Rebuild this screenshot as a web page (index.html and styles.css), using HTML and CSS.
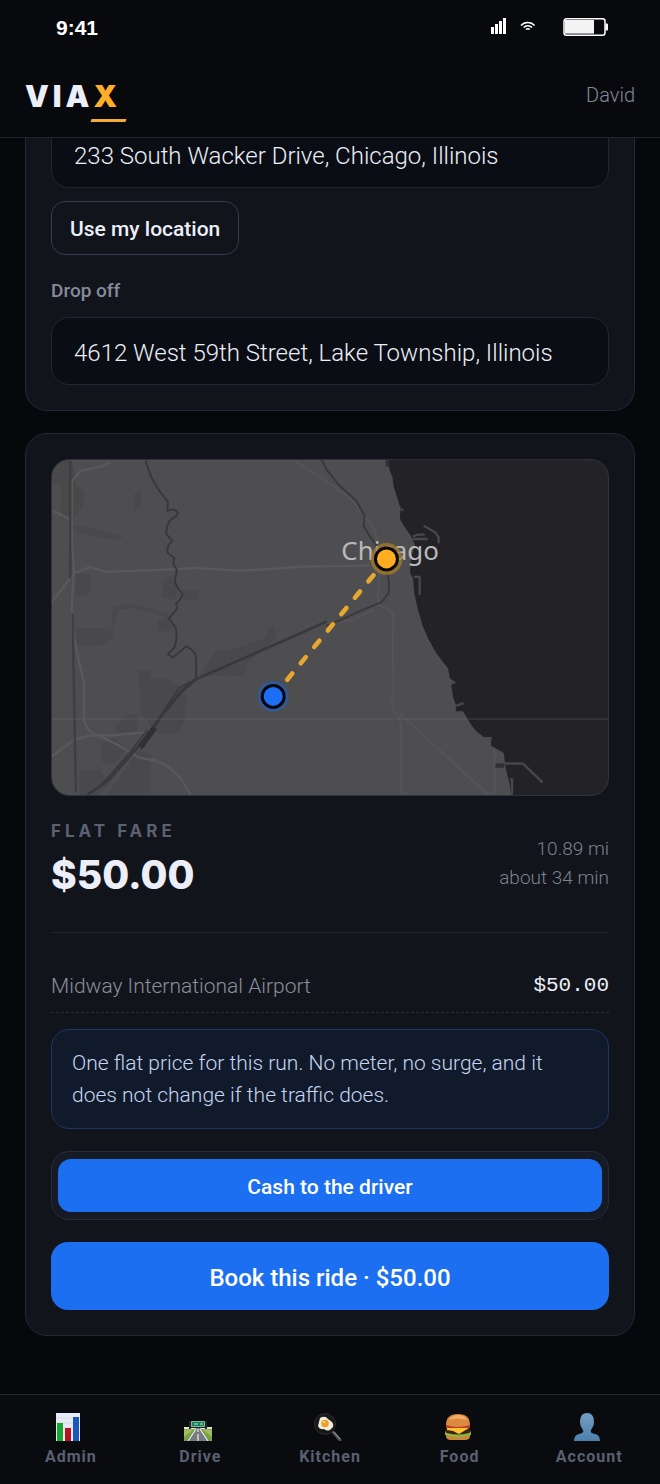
FILE: index.html
```html
<!DOCTYPE html>
<html lang="en">
<head>
<meta charset="utf-8">
<meta name="viewport" content="width=device-width, initial-scale=1">
<title>VIAX</title>
<link rel="stylesheet" href="styles.css">
</head>
<body>
<div class="app">
  <div class="status">
    <span class="clock">9:41</span>
    <div class="indicators">
      <svg class="signal" width="16" height="18" viewBox="0 0 16 18" aria-hidden="true"><path fill="#fff" d="M0 9h3v7H0zM4 6h3v10H4zM8 3h3v13H8zM12 0h3v16h-3z"/></svg>
      <svg class="wifi" width="16" height="18" viewBox="0 0 16 18" aria-hidden="true"><g fill="none" stroke="#fff" stroke-width="1.6"><path d="M1 7.500C4.500 3.400 11 3.400 14.600 7.500M3.700 9.600c2-2.500 6.300-2.500 8.300 0"/><path d="M6 11.500c1-1 2.700-1 3.700 0"/></g></svg>
      <svg class="battery" width="45" height="20" viewBox="0 0 45 20" aria-hidden="true"><rect x="1" y="1.800" width="41" height="16.500" rx="2.500" fill="#08090d" stroke="#fff" stroke-width="1.500"/><path fill="#f4f4f4" d="M2 3h29v14H2z"/><path fill="#999" d="M2 16h29v1H2z"/><path fill="#fff" d="M42.500 6.500H44q1 0 1 1v5q0 1-1 1h-1.500z"/></svg>
    </div>
  </div>

  <header class="header">
    <a class="logo" href="#">VIA<span class="logo-x">X</span></a>
    <span class="user">David</span>
  </header>

  <main class="main">
    <section class="card trip">
      <input class="field field-pickup" type="text" aria-label="Pick up" value="233 South Wacker Drive, Chicago, Illinois">
      <button class="locate" type="button">Use my location</button>
      <label class="label" for="dropoff">Drop off</label>
      <input class="field" id="dropoff" type="text" value="4612 West 59th Street, Lake Township, Illinois">
    </section>

    <section class="card quote">
      <svg class="map" viewBox="33 27 1674 1011" preserveAspectRatio="xMidYMid slice" role="img" aria-label="Route map">
        <rect x="20" y="20" width="1700" height="1030" fill="#4e4e50"/>
        <g fill="#49494b">
          <path d="M20 20h73l12 77 25 30-5 45-30 30H60V100L20 110z"/>
          <path d="M98 225l60 8 50 15 42 12-30 8-120-22zM280 130l25-15-5 50-20 22zM105 370h45v50l-20 22-25-5zM107 535h110v30l-40 22h-67zM365 395l25-20 20 40-5 35-40-10zM430 420h45v30h-45zM350 510l35-10 20 40-20 5-35-5zM295 660l35 5 0 20h45l45 25 18 35-8 75-20 32h-60l-50-60zM480 680l45-78 60-5 95-35 5-30 15-5 8 35-20 20-70 60v35zM225 830l30-35 35 0v50l-60 5zM180 880l40-15 40 30-40 50-35-5zM115 960l60 0 30 40-30 36h-60zM290 905l40 10v120H200z"/>
          <path d="M215 530l10-55 40-8 65 15 55 15" fill="none" stroke="#49494b" stroke-width="12"/>
        </g>
        <path fill="#232327" d="M1040 20L1050 60 1058 80 1062 110 1072 140 1079 165 1083 170 1080 205 1098 235 1116 260 1126 285 1118 310 1112 335 1111 368 1120 385 1124 430 1135 480 1150 530 1165 565 1190 610 1225 655 1231 685 1247 697 1235 706 1241 745 1249 765 1249 785 1270 785 1295 825 1310 845 1333 862 1357 862 1354 888 1393 910 1400 960 1410 1000 1418 1050H1720V20z"/>
        <g fill="none" stroke="#59595b" stroke-width="7" stroke-linejoin="round">
          <path d="M208 35l-25 12-65 15-25 30v180l6 90-6 90 2 90 10 50 25 110 0 110q5 30 40 45l60 28 65 40 50 8q70 25 105 105"/>
          <path d="M33 920l60-45q50-25 110-17l110-10M33 455l65-85 50-20 45 15 220-8 50-4 130 8 90-4 100-8 207-3M33 180l62 30"/>
          <g stroke="#545456"><path d="M765 30q95 65 165 110 55 70 75 100l15 60-5 140 0 25q50 15 45 40l-2 270 25 40 0 220M860 520l80-10 60-30M1078 790l270 248M1365 900v135"/></g>
        </g>
        <g fill="none" stroke="#39393b" stroke-linejoin="round">
          <path stroke-width="6" d="M315 30l17 50 20 35 30 40-2 28q22-14 32 5-3 12-20 18-15 14-15 45l18 20q-20 20-13 38l20 15-4 15 11 20-6 30q0 18 23 42-5 20-20 30 8 15-5 25l-16 20 20 25q8 30-4 62l-19 20 15 10 30-25q8-8 12-8 26 12 28 35v65l-42 35-70 85-55 90"/>
          <path stroke-width="8" d="M140 1036l65-45 105-120 50-70 60-75 40-35 80-35 250-110 70-32"/>
          <path stroke-width="6" d="M860 527l40-16 60-28 65-27 20-25q6-12 0-50l-8-40-20-45-35-50-11-20 3-30-25-45-50-45-40-50-15-30"/>
          <path stroke-width="7" stroke-opacity=".75" d="M88 30v355M95 490l10 540"/>
          <path stroke-width="5" d="M320 842l-55 70-80 90M450 695l-35 20-80 120"/>
          <path stroke="#303032" stroke-width="17" d="M300 892l42-58"/>
        </g>
        <g fill="none" stroke="#48484a" stroke-width="7"><path d="M1120 258l15-5h20M1120 266h44M1152 226l35 20 10 15v18M1140 380v55M1122 380h20M1083 178h8M1235 698h12M1250 768l22-8M1395 942h55l60 57"/><path d="M1412 990h6v45"/></g>
        <path fill="#303033" d="M1037 30h12v18h-12zM1368 942h27v13h-27z"/>
        <path stroke="#707072" stroke-opacity=".4" stroke-width="3" d="M20 808h1700"/>
        <text class="map-city" x="904" y="330">Chicago</text>
        <path stroke="#e5a82f" stroke-width="14" stroke-linecap="round" stroke-dasharray="24 40" d="M1001 375L735 697" fill="none"/>
        <circle cx="1040" cy="326" r="48" fill="#b07d27" fill-opacity=".7"/><circle cx="1040" cy="326" r="33" fill="#ffad21" stroke="#08090d" stroke-width="9"/>
        <circle cx="699" cy="740" r="46" fill="#1f5fc7" fill-opacity=".6"/><circle cx="699" cy="740" r="33" fill="#1c6ff2" stroke="#05070d" stroke-width="9"/>
      </svg>

      <div class="fare">
        <div>
          <div class="fare-label">FLAT FARE</div>
          <div class="fare-price">$50.00</div>
        </div>
        <div class="fare-meta"><div>10.89 mi</div><div>about 34 min</div></div>
      </div>

      <div class="line-item"><span>Midway International Airport</span><span class="amount">$50.00</span></div>
      <p class="note">One flat price for this run. No meter, no surge, and it does not change if the traffic does.</p>
      <div class="methods"><button class="method" type="button">Cash to the driver</button></div>
      <button class="book" type="button">Book this ride · $50.00</button>
    </section>
  </main>

  <nav class="tabs">
    <a class="tab" href="#">
      <svg class="tab-icon" width="28" height="28" viewBox="0 0 28 28" aria-hidden="true"><path fill="#e9eaf7" d="M1 0h24v28H1z"/><path stroke="#d6d8e8" d="M1 5h24M1 10h24M1 15h24M1 20h24"/><path fill="#15a82c" d="M2 10h6v18H2z"/><path fill="#b51320" d="M10 15h6v13h-6z"/><path fill="#1758b8" d="M18 4h6v24h-6z"/></svg>
      Admin
    </a>
    <a class="tab" href="#">
      <svg class="tab-icon" width="28" height="28" viewBox="0 0 28 28" aria-hidden="true"><path fill="#dfe5dc" d="M0 14h28v3H0z"/><path fill="#78a53a" d="M0 16h28v12H0z"/><path fill="#a1bd61" d="M0 17l10-1-10 8zM28 17l-10-1 10 8z"/><path fill="#777b7d" d="M12 15h4l10 13H2z"/><path stroke="#ecefed" stroke-width="1.200" d="M12 16L4 28M16 16l8 12M14 16v3m0 2v7"/><path fill="#22282a" d="M5 8h2v8H5zM21 8h2v8h-2zM5 13h18v2H5z"/><path fill="#178259" stroke="#80b69c" d="M7.500 8.500h13v5h-13z"/><path stroke="#b6e4cb" d="M10 11h4m2 0h3"/></svg>
      Drive
    </a>
    <a class="tab" href="#">
      <svg class="tab-icon" width="28" height="28" viewBox="0 0 28 28" aria-hidden="true"><path stroke="#4c4e50" stroke-width="3" stroke-linecap="round" d="M19 19l7 8"/><path stroke="#a4a6a7" d="M20 19l6 7"/><circle cx="11" cy="11" r="10.500" fill="#171819" stroke="#2c2a28"/><path fill="#f3ecda" d="M6 5q5-3 8 1l4 3q3 4-1 7-3 3-7 0-4 1-6-3 1-4 2-8z"/><circle cx="11" cy="10.500" r="3.800" fill="#eaa02b"/><circle cx="10" cy="9" r="1.200" fill="#ffd570"/></svg>
      Kitchen
    </a>
    <a class="tab" href="#">
      <svg class="tab-icon" width="28" height="28" viewBox="0 0 28 28" aria-hidden="true"><path fill="#c9863c" d="M2 21h24v2q0 4-5 4H7q-5 0-5-4z"/><path fill="#8db83c" d="M1 18q13 5 26 0v4q-13 4-26 0z"/><path fill="#3c2418" d="M2 16h24q2 3-1 4-11 3-22 0-3-1-1-4z"/><path fill="#ffc332" d="M3 15h22l-5 3-5 3-6-3-6-1z"/><path fill="#bd3d25" d="M2 12h24v3H2z"/><path fill="#dc8941" d="M2 12Q2 1 14 1t12 11q-12 4-24 0z"/><path fill="#f1ae69" d="M5 7q3-5 9-5 7 0 9 5-9-3-18 0z"/></svg>
      Food
    </a>
    <a class="tab" href="#">
      <svg class="tab-icon" width="28" height="28" viewBox="0 0 28 28" aria-hidden="true"><defs><linearGradient id="person" x2="0" y2="1"><stop stop-color="#729fc4"/><stop offset="1" stop-color="#4e80aa"/></linearGradient></defs><path fill="url(#person)" d="M14 0q7 0 7 9c0 4-2 6-3 8-1 3 1 3 4 4q5 1 5 7H1q0-6 5-7c3-1 5-1 4-4-1-2-3-4-3-8q0-9 7-9z"/></svg>
      Account
    </a>
  </nav>
</div>
</body>
</html>
```
FILE: styles.css
```css
* { box-sizing: border-box; }
body {
  margin: 0;
  background: #07080b;
  color: #eceff8;
  font-family: Roboto, "Liberation Sans", sans-serif;
}
button, input { font: inherit; color: inherit; }
a { color: inherit; text-decoration: none; }
.app { display: flex; flex-direction: column; min-height: 100vh; }
.status {
  display: flex;
  align-items: center;
  justify-content: space-between;
  height: 54px;
  padding: 0 52px 0 56px;
  background: #08090d;
}
.clock { padding-top: 2px; color: #fff; font: 700 21px/28px "Liberation Sans", sans-serif; }
.indicators { display: flex; align-items: center; }
.wifi { margin-left: 13px; }
.battery { margin-left: 27px; }
.header {
  display: flex;
  align-items: center;
  justify-content: space-between;
  height: 84px;
  padding: 0 25px;
  background: #08090d;
  border-bottom: 1px solid #20242d;
}
.logo { font: 900 30px/54px Inter, sans-serif; letter-spacing: 4px; }
.logo-x { position: relative; color: #ffae27; }
.logo-x::after {
  content: "";
  position: absolute;
  left: -2px;
  right: -5px;
  bottom: -8px;
  height: 3px;
  background: #f4ad31;
  transform: skewX(-20deg);
}
.user { padding-bottom: 2px; color: #858997; font-size: 20px; font-weight: 300; }
.main { flex: 1; overflow: hidden; padding: 0 25px 58px; }
.card {
  display: flex;
  flex-direction: column;
  padding: 25px;
  border: 1px solid #222834;
  border-radius: 22px;
  background: #11141b;
}
.trip { padding-top: 0; border-top: 0; border-radius: 0 0 22px 22px; }
.field {
  width: 100%;
  height: 68px;
  padding: 3px 22px 0;
  border: 1px solid #222631;
  border-radius: 18px;
  background: #0b0d14;
  font-size: 24px;
  font-weight: 300;
}
.field-pickup { margin-top: -18px; }
.locate {
  align-self: flex-start;
  height: 54px;
  margin-top: 13px;
  padding: 2px 18px 0;
  border: 1px solid #333d4e;
  border-radius: 14px;
  background: #11141b;
  font-size: 21px;
  font-weight: 500;
}
.label { margin: 24px 0 14px; color: #858b9c; font-size: 19px; line-height: 24px; font-weight: 500; }
.quote { margin-top: 22px; }
.map {
  display: block;
  width: 100%;
  aspect-ratio: 558 / 337;
  border: 1px solid #303139;
  border-radius: 18px;
}
.map-city { fill: #b9b9bb; font: 78px "Noto Sans", sans-serif; }
.fare {
  display: flex;
  align-items: center;
  justify-content: space-between;
  padding: 22px 0 30px;
  border-bottom: 1px solid #222731;
}
.fare-label { color: #5b6172; font: 700 17px/26px Inter, sans-serif; letter-spacing: 4px; }
.fare-price { padding-top: 4px; font: 800 39px/54px Inter, sans-serif; }
.fare-meta { margin-top: 6px; color: #7d828e; font-size: 19px; line-height: 29px; font-weight: 300; text-align: right; }
.line-item {
  display: flex;
  align-items: center;
  justify-content: space-between;
  margin-top: 37px;
  padding-bottom: 10px;
  border-bottom: 1px dashed #2a2e37;
  color: #8b8f9b;
  font-size: 21px;
  line-height: 32px;
  font-weight: 300;
}
.amount { color: #eceff8; font-family: "Liberation Mono", monospace; }
.note {
  margin: 16px 0 0;
  padding: 17px 20px;
  border: 1px solid #1d3764;
  border-radius: 18px;
  background: #111a2b;
  color: #c5d5f2;
  font-size: 21px;
  line-height: 32px;
  font-weight: 300;
}
.methods { display: flex; margin-top: 22px; padding: 7px 6px; border: 1px solid #282c37; border-radius: 18px; background: #151a24; }
.method, .book { flex: 1; border: 0; background: #1c6ff1; color: #fff; font-weight: 500; }
.method { height: 53px; border-radius: 13px; padding-top: 3px; font-size: 21px; }
.book { flex: none; height: 68px; margin-top: 22px; padding-top: 4px; border-radius: 17px; font-size: 24px; }
.tabs {
  position: sticky;
  bottom: 0;
  display: grid;
  grid-template-columns: repeat(5, 1fr);
  height: 90px;
  padding: 18px 6px 0;
  border-top: 1px solid #20252e;
  background: #090b0f;
}
.tab {
  display: flex;
  flex-direction: column;
  align-items: center;
  gap: 4px;
  color: #5b6071;
  font-size: 16px;
  line-height: 24px;
  font-weight: 700;
  letter-spacing: 1px;
}
.tab-icon { margin-right: 4px; }
```
